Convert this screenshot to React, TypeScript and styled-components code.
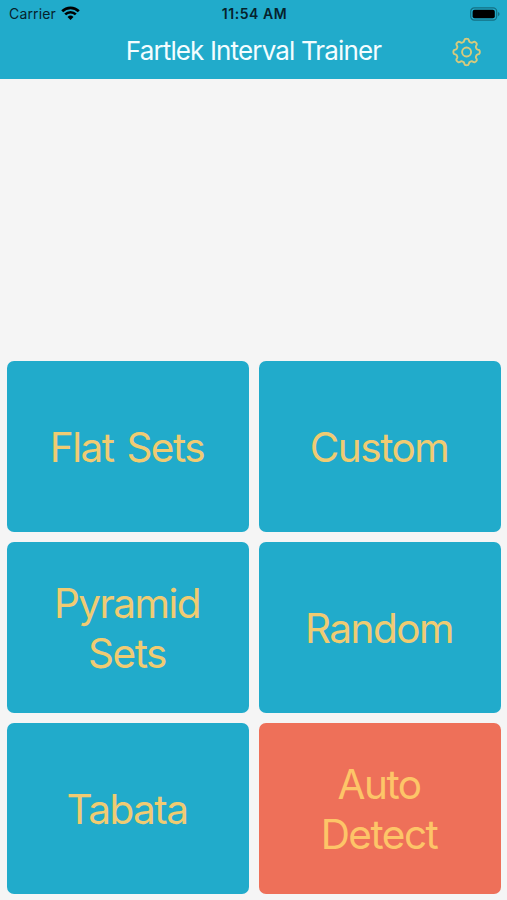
import React from 'react';
import styled, { createGlobalStyle } from 'styled-components';

const GlobalStyle = createGlobalStyle`
  * { box-sizing: border-box; }
  body { margin: 0; background: #f5f5f5; font-family: Inter, "Liberation Sans", sans-serif; }
`;

const Screen = styled.main`
  height: 900px;
  width: 507px;
  display: flex;
  flex-direction: column;
  justify-content: space-between;
  background: #f5f5f5;
`;

const Header = styled.header`
  height: 79px;
  background: #21abcb;
`;

const StatusBar = styled.div`
  height: 27px;
  padding: 0 7px 0 9px;
  display: grid;
  grid-template-columns: 1fr auto 1fr;
  align-items: center;
  color: #06222b;
`;

const Carrier = styled.div`
  display: flex;
  align-items: center;
  gap: 5px;
  font-size: 14px;
  letter-spacing: 0.15px;
`;

const Clock = styled.div`
  font-size: 14px;
  font-weight: 600;
  letter-spacing: 0.55px;
`;

const Battery = styled.svg`
  justify-self: end;
`;

const NavBar = styled.div`
  height: 50px;
  padding: 0 25px;
  display: grid;
  grid-template-columns: 30px 1fr 30px;
  align-items: center;
`;

const Title = styled.h1`
  grid-column: 2;
  margin: -3px 0 0;
  text-align: center;
  color: #f4fdff;
  font-size: 26px;
  font-weight: 400;
  letter-spacing: -0.86px;
  white-space: nowrap;
`;

const SettingsButton = styled.button`
  padding: 0;
  border: 0;
  background: none;
  display: flex;
`;

const Grid = styled.section`
  padding: 0 6px 6px 7px;
  display: grid;
  grid-template-columns: 242px 242px;
  grid-auto-rows: 171px;
  gap: 10px;
`;

const Tile = styled.button<{ $accent?: boolean }>`
  padding: 2px 22px 0 20px;
  border: 0;
  border-radius: 7px;
  background: ${(p) => (p.$accent ? '#ee7059' : '#21abcb')};
  color: ${(p) => (p.$accent ? '#fdc568' : '#f0cb72')};
  font: 400 40.5px/50px Inter, sans-serif;
  letter-spacing: -1.5px;
  word-spacing: 3px;
`;

const WifiIcon = () => (
  <svg width="19" height="15" viewBox="0 0 19 15" fill="none" stroke="#000" strokeWidth="2.7">
    <path d="M1.2 5.2a11.8 11.8 0 0 1 16.6 0M4.2 8.4a7.6 7.6 0 0 1 10.6 0" />
    <path d="M9.5 14 6.5 11a4.3 4.3 0 0 1 6 0Z" fill="#000" stroke="none" />
  </svg>
);

const gearOutline = (() => {
  const points: string[] = [];
  for (let i = 0; i < 144; i++) {
    const a = (i / 144) * Math.PI * 2;
    const wave = Math.tanh(2 * Math.cos(8 * a)) / Math.tanh(2);
    const r = 11.8 + 1.4 * wave;
    points.push(`${(14.6 + r * Math.sin(a)).toFixed(2)} ${(15 - r * Math.cos(a)).toFixed(2)}`);
  }
  return `M${points.join('L')}Z`;
})();

const GearIcon = () => (
  <svg width="30" height="30" viewBox="0 0 30 30" fill="none" stroke="#d8ca7c" strokeWidth="1.9" strokeLinejoin="round">
    <path d={gearOutline} />
    <circle cx="14.6" cy="15" r="4.5" />
  </svg>
);

const modes = ['Flat Sets', 'Custom', 'Pyramid Sets', 'Random', 'Tabata', 'Auto Detect'];

export default function App() {
  return (
    <Screen>
      <GlobalStyle />
      <Header>
        <StatusBar>
          <Carrier>Carrier<WifiIcon /></Carrier>
          <Clock>11:54 AM</Clock>
          <Battery width="30" height="14" viewBox="0 0 30 14">
            <rect x="0.7" y="0.9" width="26" height="12.2" rx="3.6" fill="none" stroke="#147084" strokeWidth="1.2" />
            <rect x="2.6" y="2.7" width="22.2" height="8.6" rx="2" fill="#000" />
            <path d="M28 5v4.2q1.6-.5 1.6-2.1T28 5Z" fill="#147084" />
          </Battery>
        </StatusBar>
        <NavBar>
          <Title>Fartlek Interval Trainer</Title>
          <SettingsButton aria-label="Settings"><GearIcon /></SettingsButton>
        </NavBar>
      </Header>
      <Grid>
        {modes.map((m) => <Tile key={m} $accent={m === 'Auto Detect'}>{m}</Tile>)}
      </Grid>
    </Screen>
  );
}
